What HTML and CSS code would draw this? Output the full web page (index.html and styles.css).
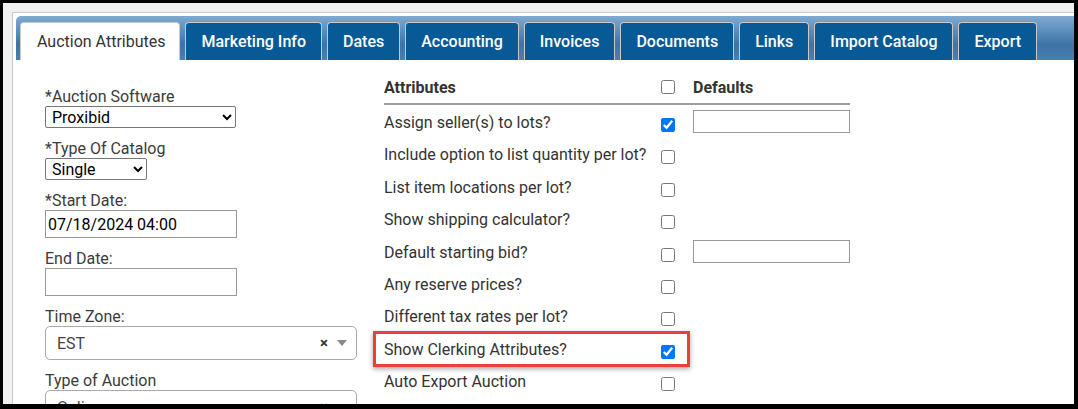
FILE: index.html
```html
<!DOCTYPE html>
<html lang="en">
<head>
    <meta charset="UTF-8">
    <meta name="viewport" content="width=device-width, initial-scale=1.0">
    <title>Auction Attributes</title>
    <link rel="stylesheet" href="styles.css">
</head>
<body>

<div class="screen">
    <div class="panel">
        <ul class="tabs">
            <li class="tab active">Auction Attributes</li>
            <li class="tab">Marketing Info</li>
            <li class="tab">Dates</li>
            <li class="tab">Accounting</li>
            <li class="tab">Invoices</li>
            <li class="tab">Documents</li>
            <li class="tab">Links</li>
            <li class="tab">Import Catalog</li>
            <li class="tab">Export</li>
        </ul>

        <div class="content">
            <div class="left-col">
                <div class="field">
                    <label>*Auction Software</label>
                    <select class="native wide">
                        <option>Proxibid</option>
                    </select>
                </div>
                <div class="field">
                    <label>*Type Of Catalog</label>
                    <select class="native narrow">
                        <option>Single</option>
                    </select>
                </div>
                <div class="field">
                    <label>*Start Date:</label>
                    <input type="text" class="text-input" value="07/18/2024 04:00">
                </div>
                <div class="field">
                    <label>End Date:</label>
                    <input type="text" class="text-input" value="">
                </div>
                <div class="field">
                    <label>Time Zone:</label>
                    <div class="combo">
                        <span class="combo-value">EST</span>
                        <span class="combo-clear">&times;</span>
                        <span class="combo-arrow"></span>
                    </div>
                </div>
                <div class="field">
                    <label>Type of Auction</label>
                    <div class="combo">
                        <span class="combo-value">Online</span>
                        <span class="combo-clear">&times;</span>
                        <span class="combo-arrow"></span>
                    </div>
                </div>
            </div>

            <div class="attributes">
                <div class="attr-head">
                    <span>Attributes</span>
                    <input type="checkbox">
                    <span>Defaults</span>
                </div>
                <div class="attr-row">
                    <span class="attr-label">Assign seller(s) to lots?</span>
                    <input type="checkbox" checked>
                    <input type="text" class="default-input">
                </div>
                <div class="attr-row">
                    <span class="attr-label">Include option to list quantity per lot?</span>
                    <input type="checkbox">
                </div>
                <div class="attr-row">
                    <span class="attr-label">List item locations per lot?</span>
                    <input type="checkbox">
                </div>
                <div class="attr-row">
                    <span class="attr-label">Show shipping calculator?</span>
                    <input type="checkbox">
                </div>
                <div class="attr-row">
                    <span class="attr-label">Default starting bid?</span>
                    <input type="checkbox">
                    <input type="text" class="default-input">
                </div>
                <div class="attr-row">
                    <span class="attr-label">Any reserve prices?</span>
                    <input type="checkbox">
                </div>
                <div class="attr-row">
                    <span class="attr-label">Different tax rates per lot?</span>
                    <input type="checkbox">
                </div>
                <div class="attr-row">
                    <span class="attr-label">Show Clerking Attributes?</span>
                    <input type="checkbox" checked>
                    <span class="highlight"></span>
                </div>
                <div class="attr-row">
                    <span class="attr-label">Auto Export Auction</span>
                    <input type="checkbox">
                </div>
            </div>
        </div>
    </div>
</div>

</body>
</html>
```

FILE: styles.css
```css
html, body {
    margin: 0;
    padding: 0;
    background: #000;
    height: 409px;
    overflow: hidden;
}
body {
    font-family: Roboto, 'Liberation Sans', sans-serif;
    font-size: 16px;
    color: #333;
}
.screen {
    margin: 3px 4px 0 3px;
    height: 401px;
    background: #f1f1f1;
    padding: 9px 0 0 9px;
    box-sizing: border-box;
    overflow: hidden;
}
.panel {
    background: #fff;
    border: 1px solid #c8c8c8;
    border-right: none;
    border-bottom: none;
    padding: 3px 0 0 3px;
    height: 420px;
}
.tabs {
    list-style: none;
    margin: 0;
    padding: 6px 0 0 4px;
    display: flex;
    gap: 5px;
    background: linear-gradient(#80aad0 0%, #5b8dbb 35%, #3c74a6 65%, #4b7fb0 100%);
    border-radius: 5px 0 0 0;
}
.tab {
    height: 37px;
    line-height: 37px;
    padding: 0 15px;
    border: 1px solid #c9c9c9;
    border-bottom: none;
    border-radius: 4px 4px 0 0;
    background: #075a96;
    color: #fff;
    font-weight: 500;
    white-space: nowrap;
}
.tab.active {
    background: #fff;
    color: #333;
    font-weight: 400;
    padding: 0 14px 0 16px;
}
.content {
    display: flex;
    gap: 27px;
    padding-left: 29px;
}
.left-col {
    width: 312px;
    padding-top: 28px;
    display: flex;
    flex-direction: column;
    gap: 12px;
}
.field label {
    display: block;
    line-height: 18px;
    color: #3b3b3b;
}
.native {
    font-family: Roboto, 'Liberation Sans', sans-serif;
    font-size: 16px;
    color: #000;
    height: 22px;
    border: 1px solid #767676;
    border-radius: 2px;
    background: #fff;
    padding: 0 2px;
}
.native.wide {
    width: 191px;
}
.native.narrow {
    width: 102px;
}
.text-input {
    display: block;
    width: 192px;
    height: 28px;
    box-sizing: border-box;
    border: 1px solid #999;
    font-family: Roboto, 'Liberation Sans', sans-serif;
    font-size: 16px;
    color: #000;
    padding: 0 2px;
}
.combo {
    display: flex;
    align-items: center;
    height: 34px;
    box-sizing: border-box;
    border: 1px solid #aaa;
    border-radius: 5px;
    padding: 0 9px 0 11px;
    color: #444;
}
.combo-value {
    flex-grow: 1;
}
.combo-clear {
    font-weight: 700;
    font-size: 15px;
    color: #333;
    margin-right: 9px;
}
.combo-arrow {
    width: 0;
    height: 0;
    border-left: 5px solid transparent;
    border-right: 5px solid transparent;
    border-top: 6px solid #888;
}
.attributes {
    width: 466px;
    padding-top: 17px;
}
.attr-head,
.attr-row {
    display: grid;
    grid-template-columns: 277px 32px 157px;
    position: relative;
}
.attr-head {
    align-items: center;
    height: 20px;
    padding-bottom: 6px;
    border-bottom: 2px solid #9d9d9d;
    font-weight: 700;
}
.attr-row {
    height: 32.4px;
    align-items: start;
}
.attr-label {
    line-height: 20px;
    padding-top: 8px;
    white-space: nowrap;
}
input[type="checkbox"] {
    width: 14px;
    height: 14px;
    margin: 0;
}
.attr-row input[type="checkbox"] {
    margin-top: 13px;
}
.default-input {
    width: 157px;
    height: 23px;
    box-sizing: border-box;
    border: 1px solid #999;
    margin-top: 5px;
}
.highlight {
    position: absolute;
    left: -11px;
    top: -1px;
    width: 317px;
    height: 36px;
    box-sizing: border-box;
    border: 3px solid #e8403f;
    box-shadow: 0 2px 5px rgba(0, 0, 0, 0.35);
    pointer-events: none;
}
```
